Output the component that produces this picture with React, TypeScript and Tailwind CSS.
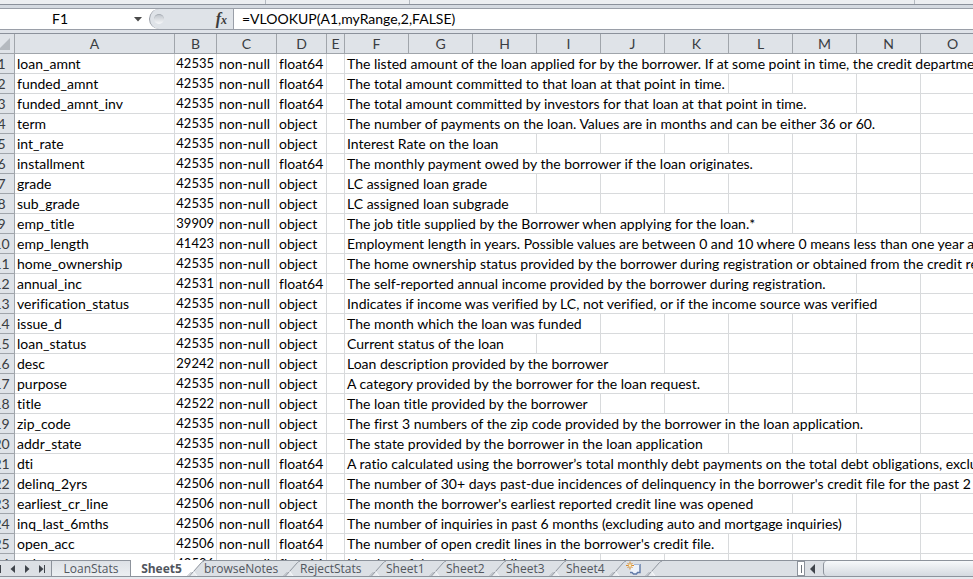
import React from "react";

type Row = [string, number, string, string, number];

const rows: Row[] = [
  ["loan_amnt", 42535, "float64", "The listed amount of the loan applied for by the borrower. If at some point in time, the credit department reduces the loan amount, then it will be reflected in this value.", 10],
  ["funded_amnt", 42535, "float64", "The total amount committed to that loan at that point in time.", 6],
  ["funded_amnt_inv", 42535, "float64", "The total amount committed by investors for that loan at that point in time.", 8],
  ["term", 42535, "object", "The number of payments on the loan. Values are in months and can be either 36 or 60.", 9],
  ["int_rate", 42535, "object", "Interest Rate on the loan", 3],
  ["installment", 42535, "float64", "The monthly payment owed by the borrower if the loan originates.", 7],
  ["grade", 42535, "object", "LC assigned loan grade", 3],
  ["sub_grade", 42535, "object", "LC assigned loan subgrade", 3],
  ["emp_title", 39909, "object", "The job title supplied by the Borrower when applying for the loan.*", 7],
  ["emp_length", 41423, "object", "Employment length in years. Possible values are between 0 and 10 where 0 means less than one year and 10 means ten or more years.", 10],
  ["home_ownership", 42535, "object", "The home ownership status provided by the borrower during registration or obtained from the credit report.", 10],
  ["annual_inc", 42531, "float64", "The self-reported annual income provided by the borrower during registration.", 8],
  ["verification_status", 42535, "object", "Indicates if income was verified by LC, not verified, or if the income source was verified", 9],
  ["issue_d", 42535, "object", "The month which the loan was funded", 4],
  ["loan_status", 42535, "object", "Current status of the loan", 3],
  ["desc", 29242, "object", "Loan description provided by the borrower", 5],
  ["purpose", 42535, "object", "A category provided by the borrower for the loan request.", 6],
  ["title", 42522, "object", "The loan title provided by the borrower", 4],
  ["zip_code", 42535, "object", "The first 3 numbers of the zip code provided by the borrower in the loan application.", 9],
  ["addr_state", 42535, "object", "The state provided by the borrower in the loan application", 6],
  ["dti", 42535, "float64", "A ratio calculated using the borrower’s total monthly debt payments on the total debt obligations, excluding mortgage", 10],
  ["delinq_2yrs", 42506, "float64", "The number of 30+ days past-due incidences of delinquency in the borrower's credit file for the past 2 years", 10],
  ["earliest_cr_line", 42506, "object", "The month the borrower's earliest reported credit line was opened", 7],
  ["inq_last_6mths", 42506, "float64", "The number of inquiries in past 6 months (excluding auto and mortgage inquiries)", 8],
  ["open_acc", 42506, "float64", "The number of open credit lines in the borrower's credit file.", 6],
  ["pub_rec", 42506, "float64", "Number of derogatory public records", 4],
];

const wide = ["F", "G", "H", "I", "J", "K", "L", "M", "N", "O"];
const letters = ["A", "B", "C", "D", "E", ...wide];

const cell = "h-5 border-r border-b border-[#d8dadc] p-0 leading-[19px] whitespace-nowrap";
const header = "h-5 border-r border-b border-[#a0a5ab] p-0 leading-[19px] font-normal text-[#3a3d42]";

function Grid() {
  return (
    <table className="-ml-[11px] w-[996px] table-fixed border-separate border-spacing-0 text-[14px] text-black [font-variant-ligatures:none]">
      <colgroup>
        <col className="w-[26px]" />
        <col className="w-[160px]" />
        <col className="w-[42px]" />
        <col className="w-[60px]" />
        <col className="w-[50px]" />
        <col className="w-[18px]" />
        {wide.map((l) => (
          <col key={l} className="w-16" />
        ))}
      </colgroup>
      <thead>
        <tr className="bg-[#dfe3e8]">
          <th className={header} aria-label="Select all">
            <svg viewBox="0 0 12 12" className="mr-1 ml-auto h-3 w-3" aria-hidden="true">
              <path d="M12 0v12H0z" fill="#b4b9bf" />
            </svg>
          </th>
          {letters.map((l) => (
            <th key={l} className={header}>
              {l}
            </th>
          ))}
        </tr>
      </thead>
      <tbody>
        {rows.map(([name, count, type, text, span], i) => (
          <tr key={name}>
            <th className={`${header} bg-[#dfe3e8]`}>{i + 1}</th>
            <td className={`${cell} pl-[2px]`}>{name}</td>
            <td className={`${cell} pr-[2px] text-right text-[13px]`}>{count}</td>
            <td className={`${cell} pl-[2px]`}>non-null</td>
            <td className={`${cell} pl-[2px]`}>{type}</td>
            <td className={cell}></td>
            <td colSpan={span} className={`${cell} pl-[2px]`}>{text}</td>
            {wide.slice(span).map((l) => (
              <td key={l} className={cell}></td>
            ))}
          </tr>
        ))}
      </tbody>
    </table>
  );
}

function Slash({ after = false }: { after?: boolean }) {
  return (
    <svg viewBox="0 0 20 15" className="h-[15px] w-5 shrink-0 overflow-visible" aria-hidden="true">
      {after && <path d="M0 -1H19L6 15H0z" fill="#fff" />}
      <path d="M9.500 10L13.500 15H5.500z" fill="#e9ecf0" />
      <path d="M5.500 15L17.500 1.500Q18.500 .5 20 0" fill="none" stroke="#8f959e" />
      <path d="M3.500 15L7.500 11" fill="none" stroke="#a9aeb6" />
      <path d="M9.500 10.500L13 15" fill="none" stroke="#f8f9fb" />
    </svg>
  );
}

const tabs: [string, string][] = [
  ["browseNotes", "w-[76px]"],
  ["RejectStats", "w-[66px]"],
  ["Sheet1", "w-10"],
  ["Sheet2", "w-10"],
  ["Sheet3", "w-10"],
  ["Sheet4", "w-10"],
];

function SheetBar() {
  return (
    <footer className="shrink-0 bg-[#e6e9ee] font-['Open_Sans',sans-serif] text-[12px] text-[#51565e]">
      <div className="flex h-[17px] items-stretch border-t border-b border-[#8d939c] bg-[#dce0e5]">
        <div className="flex w-[51px] shrink-0 items-center text-[#3f444b]">
          <button aria-label="First sheet" className="h-2 w-1.5"><svg viewBox="0 0 6 8" className="h-2 w-1.5"><path d="M0 0v8" stroke="currentColor" strokeWidth="2" /></svg></button>
          <button aria-label="Previous sheet" className="h-2 w-[14px]"><svg viewBox="0 0 14 8" className="h-2 w-[14px]"><path d="M9 0v8L4.500 4z" fill="currentColor" /></svg></button>
          <button aria-label="Next sheet" className="h-2 w-[14px]"><svg viewBox="0 0 14 8" className="h-2 w-[14px]"><path d="M5 0v8l4.500-4z" fill="currentColor" /></svg></button>
          <button aria-label="Last sheet" className="h-2 w-[14px]"><svg viewBox="0 0 14 8" className="h-2 w-[14px]"><path d="M5 0v8l4.500-4zM10 0h1v8h-1z" fill="currentColor" /></svg></button>
        </div>
        <button className="w-20 shrink-0 border-x border-[#8d939c] bg-linear-to-b from-[#dde1e6] to-[#eceff2] leading-[15px]">LoanStats</button>
        <button className="-mt-px w-[53px] shrink-0 bg-white pt-px pl-2 text-center leading-[15px] font-bold">Sheet5</button>
        {tabs.map(([t, w], i) => (
          <React.Fragment key={t}>
            <Slash after={i === 0} />
            <button className={`${w} shrink-0 text-left leading-[15px]`}>{t}</button>
          </React.Fragment>
        ))}
        <Slash />
        <button aria-label="Insert worksheet" className="h-[15px] w-4 shrink-0">
          <svg viewBox="0 0 16 15" className="h-[15px] w-4" aria-hidden="true">
            <path d="M4.500 3.500h9.500v8h-2.500l-1 1.500H8L6.500 11.500h-2z" fill="#eef3fb" />
            <path d="M14 3v8.500h-2.500l-1 1.500H7.500L6 11.500H4" fill="none" stroke="#5f79a8" strokeWidth="1.400" />
            <path d="M8 3.500h6" stroke="#a9bbd8" />
            <path d="M4 .5v8M0 4.500h8M1.500 2l5 5M6.500 2l-5 5" stroke="#d98a2b" />
            <circle cx="4" cy="4.500" r="1.300" fill="#fff3c4" />
          </svg>
        </button>
        <Slash />
        <div className="flex-1" />
        <div className="flex w-[176px] shrink-0 items-center">
          <span className="flex h-[15px] w-2 items-center justify-center border border-[#8d939c] bg-white"><span className="h-2 w-px bg-[#6c727a]" /></span>
          <button aria-label="Scroll left" className="h-2.5 w-[18px]"><svg viewBox="0 0 18 10" className="h-2.5 w-[18px]"><path d="M10 0v10L5 5z" fill="#3f444b" /></svg></button>
          <div className="h-[15px] flex-1 rounded-l-sm border-l border-[#8d939c] bg-linear-to-b from-[#f7f9fb] to-[#d5dae0]" />
        </div>
      </div>
      <div className="h-0.5" />
    </footer>
  );
}

export default function App() {
  return (
    <div className="flex h-screen flex-col overflow-hidden bg-white font-[Lato,sans-serif]">
      <div className="flex h-[5px] shrink-0 border-b border-[#8b919b] bg-[#eceef1]">
        <span className="w-[266px] border-r border-[#b5bac1]" />
        <span className="w-36 border-r border-[#b5bac1]" />
        <span className="w-[505px] border-r border-[#b5bac1]" />
      </div>
      <div className="h-[3px] shrink-0 bg-[#d5dae1]" />
      <div className="flex h-[22px] shrink-0 border-y border-[#9a9fa8] bg-white text-[14px] text-black">
        <div className="flex w-[149px] shrink-0 items-center">
          <input aria-label="Name box" defaultValue="F1" className="h-5 w-[120px] bg-transparent text-center leading-5 outline-none" />
          <button aria-label="Names" className="ml-3.5"><svg viewBox="0 0 8 5" className="h-[5px] w-2"><path d="M0 0h8L4 4.500z" fill="#4a4a4a" /></svg></button>
        </div>
        <div className="flex flex-1 items-center bg-white">
          <div className="flex h-5 w-[85px] shrink-0 items-center justify-between rounded-l-full border-r border-l border-[#9a9fa8] bg-[#dfe3e8] pr-1.5 pl-1">
            <span className="h-2.5 w-2.5 rounded-full border-t border-[#a9aeb5] bg-linear-to-b from-[#c3c8ce] to-[#f7f8fa]" />
            <button aria-label="Insert function" className="font-['Liberation_Serif',serif] text-[16px] leading-4 font-bold text-[#3b3b3b] italic">f<span className="text-[12px]">x</span></button>
          </div>
          <input aria-label="Formula" defaultValue="=VLOOKUP(A1,myRange,2,FALSE)" className="h-5 min-w-0 flex-1 bg-transparent pl-2 leading-5 outline-none" />
        </div>
      </div>
      <div className="h-[4px] shrink-0 border-b border-[#8b919b] bg-[#dfe3e9]" />
      <main className="min-h-0 flex-1 overflow-hidden">
        <Grid />
      </main>
      <SheetBar />
    </div>
  );
}
